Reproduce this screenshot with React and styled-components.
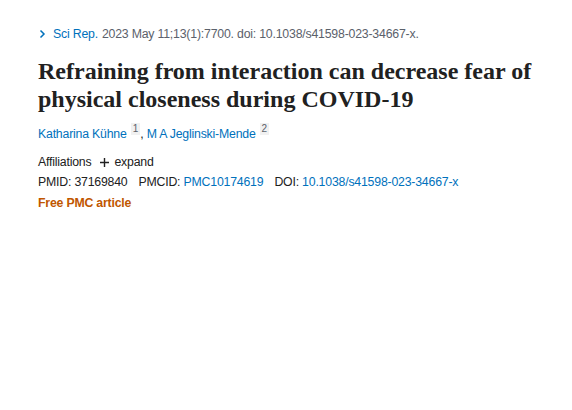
import styled, { createGlobalStyle } from 'styled-components';

const GlobalStyle = createGlobalStyle`
    body {
        margin: 0;
        background: #ffffff;
        font-family: "Liberation Sans", Arial, sans-serif;
        color: #212121;
    }
`

function App() {
    return (
        <>
            <GlobalStyle />
            <Page>
                <Citation>
                    <JournalLink href="#">
                        <svg width="9" height="10" viewBox="0 0 9 10">
                            <path d="M2.5 1.5 L6 5 L2.5 8.5" fill="none" stroke="#0071bc" strokeWidth="1.5" />
                        </svg>
                        Sci Rep.
                    </JournalLink>
                    <span>2023 May 11;13(1):7700. doi: 10.1038/s41598-023-34667-x.</span>
                </Citation>
                <Title>Refraining from interaction can decrease fear of physical closeness during COVID‑19</Title>
                <Authors>
                    <BlueLink href="#">Katharina Kühne</BlueLink>
                    <Sup>1</Sup>
                    <span>, </span>
                    <BlueLink href="#">M A Jeglinski-Mende</BlueLink>
                    <Sup>2</Sup>
                </Authors>
                <Affiliations>
                    <span>Affiliations</span>
                    <Expand>
                        <svg width="11" height="11" viewBox="0 0 11 11">
                            <path d="M5.5 1 V10 M1 5.5 H10" stroke="#212121" strokeWidth="1.4" />
                        </svg>
                        expand
                    </Expand>
                </Affiliations>
                <Identifiers>
                    <Ident>PMID: 37169840</Ident>
                    <Ident>PMCID: <BlueLink href="#">PMC10174619</BlueLink></Ident>
                    <Ident>DOI: <BlueLink href="#">10.1038/s41598-023-34667-x</BlueLink></Ident>
                </Identifiers>
                <FreeArticle>Free PMC article</FreeArticle>
            </Page>
        </>
    );
}

export default App

const Page = styled.div`
    padding: 24px 38px;
    font-size: 12.3px;
    letter-spacing: -0.2px;
`

const Citation = styled.div`
    display: flex;
    align-items: center;
    gap: 4px;
    color: #5b616b;
    line-height: 20px;
    white-space: nowrap;
`

const JournalLink = styled.a`
    display: flex;
    align-items: center;
    gap: 6px;
    color: #0071bc;
    text-decoration: none;
`

const Title = styled.h1`
    margin: 13px 0 10px;
    font-family: "Liberation Serif", serif;
    font-weight: bold;
    font-size: 24px;
    line-height: 28px;
    letter-spacing: 0;
    color: #212121;
`

const BlueLink = styled.a`
    color: #0071bc;
    text-decoration: none;
`

const Authors = styled.div`
    line-height: 20px;
`

const Sup = styled.sup`
    display: inline-block;
    margin-left: 4px;
    padding: 0 2px;
    background: #f1f1f1;
    color: #5b616b;
    font-size: 10px;
    line-height: 12px;
    letter-spacing: 0;
    vertical-align: 6px;
`

const Affiliations = styled.div`
    display: flex;
    align-items: center;
    gap: 8px;
    margin-top: 8px;
    line-height: 20px;
`

const Expand = styled.span`
    display: flex;
    align-items: center;
    gap: 4px;
`

const Identifiers = styled.div`
    display: flex;
    gap: 11px;
    line-height: 21px;
`

const Ident = styled.span`
    white-space: nowrap;
`

const FreeArticle = styled.div`
    color: #c05600;
    font-weight: bold;
    line-height: 20px;
`
